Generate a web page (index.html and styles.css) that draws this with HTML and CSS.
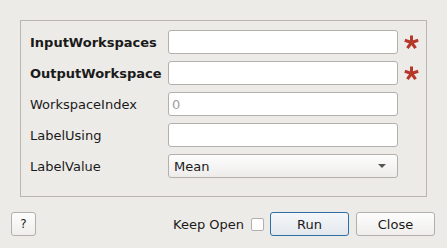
FILE: index.html
```html
<!DOCTYPE html>
<html lang="en">
<head>
  <meta charset="UTF-8">
  <title>Algorithm dialog</title>
  <link rel="stylesheet" href="styles.css">
</head>
<body>

  <div class="props-frame">
    <div class="props-grid">
      <label class="prop-label mandatory">InputWorkspaces</label>
      <input type="text" class="prop-input">
      <span class="star"><svg width="15" height="15" viewBox="0 0 15 15"><g stroke="#b7382a" stroke-width="3" stroke-linecap="butt"><line x1="7.5" y1="7.5" x2="7.5" y2="0.5"/><line x1="7.5" y1="7.5" x2="14.2" y2="5.3"/><line x1="7.5" y1="7.5" x2="11.6" y2="13.2"/><line x1="7.5" y1="7.5" x2="3.4" y2="13.2"/><line x1="7.5" y1="7.5" x2="0.8" y2="5.3"/></g></svg></span>

      <label class="prop-label mandatory">OutputWorkspace</label>
      <input type="text" class="prop-input">
      <span class="star"><svg width="15" height="15" viewBox="0 0 15 15"><g stroke="#b7382a" stroke-width="3" stroke-linecap="butt"><line x1="7.5" y1="7.5" x2="7.5" y2="0.5"/><line x1="7.5" y1="7.5" x2="14.2" y2="5.3"/><line x1="7.5" y1="7.5" x2="11.6" y2="13.2"/><line x1="7.5" y1="7.5" x2="3.4" y2="13.2"/><line x1="7.5" y1="7.5" x2="0.8" y2="5.3"/></g></svg></span>

      <label class="prop-label">WorkspaceIndex</label>
      <input type="text" class="prop-input" placeholder="0">
      <span></span>

      <label class="prop-label">LabelUsing</label>
      <input type="text" class="prop-input">
      <span></span>

      <label class="prop-label">LabelValue</label>
      <div class="prop-combo">
        <span>Mean</span>
        <span class="combo-arrow"></span>
      </div>
      <span></span>
    </div>
  </div>

  <div class="button-bar">
    <button class="btn help-btn">?</button>
    <div class="right-buttons">
      <label class="keep-open">Keep Open <span class="check-box"></span></label>
      <button class="btn run-btn">Run</button>
      <button class="btn close-btn">Close</button>
    </div>
  </div>

</body>
</html>
```

FILE: styles.css
```css
body {
  font-family: "DejaVu Sans", sans-serif;
  font-size: 13px;
  color: #1a1a1a;
  background-color: #edebe8;
  margin: 0;
  width: 447px;
  height: 248px;
  overflow: hidden;
}

.props-frame {
  margin: 20px 20px 0 20px;
  height: 175px;
  border: 1px solid #b9b6b2;
  padding: 9px 0 0 9px;
  box-sizing: border-box;
  height: 177px;
}

.props-grid {
  display: grid;
  grid-template-columns: 138px 230px 21px;
  grid-auto-rows: 24px;
  row-gap: 7px;
  align-items: center;
}

.prop-label {
  white-space: nowrap;
}

.mandatory {
  font-weight: bold;
}

.prop-input {
  height: 24px;
  box-sizing: border-box;
  border: 1px solid #b3b0ac;
  border-radius: 3px;
  background-color: white;
  font-family: "DejaVu Sans", sans-serif;
  font-size: 13px;
  padding: 0 3px;
  margin: 0;
}

.prop-input::placeholder {
  color: #a0a0a0;
}

.star {
  display: flex;
  justify-content: flex-end;
  align-items: center;
}

.prop-combo {
  height: 24px;
  box-sizing: border-box;
  border: 1px solid #b3b0ac;
  border-radius: 3px;
  background: linear-gradient(#fdfdfd, #eeeceb);
  display: flex;
  align-items: center;
  justify-content: space-between;
  padding: 0 11px 0 5px;
}

.combo-arrow {
  width: 0;
  height: 0;
  border-left: 4px solid transparent;
  border-right: 4px solid transparent;
  border-top: 4px solid #555;
}

.button-bar {
  display: flex;
  justify-content: space-between;
  align-items: center;
  margin-top: 15px;
  padding: 0 12px 0 11px;
}

.right-buttons {
  display: flex;
  align-items: center;
}

.btn {
  height: 24px;
  box-sizing: border-box;
  border: 1px solid #b3b0ac;
  border-radius: 3px;
  background: linear-gradient(#fdfdfd, #efeeec);
  font-family: "DejaVu Sans", sans-serif;
  font-size: 13px;
  color: #1a1a1a;
  padding: 0;
}

.help-btn {
  width: 25px;
  font-size: 12px;
}

.keep-open {
  display: flex;
  align-items: center;
  gap: 7px;
  margin-right: 6px;
}

.check-box {
  width: 13px;
  height: 13px;
  box-sizing: border-box;
  border: 1px solid #b3b0ac;
  border-radius: 2px;
  background-color: white;
}

.run-btn {
  width: 79px;
  border-color: #2c6fa5;
  background: linear-gradient(#f5f7f9, #e3e8ed);
  margin-right: 7px;
}

.close-btn {
  width: 79px;
}
```
